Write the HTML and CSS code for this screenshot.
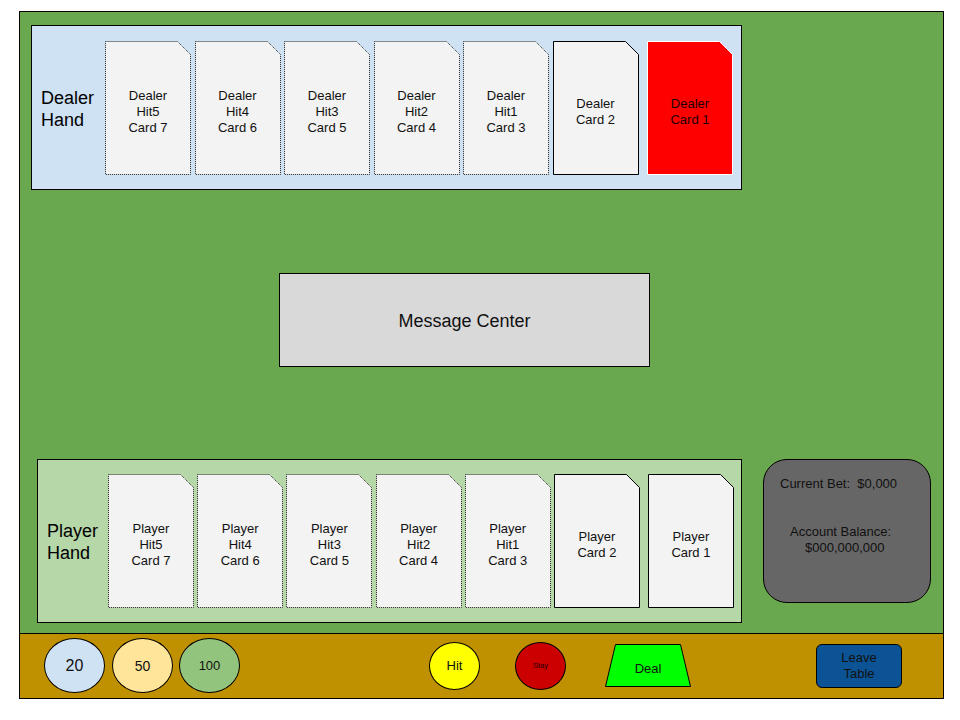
FILE: index.html
```html
<!DOCTYPE html>
<html>
<head>
<meta charset="utf-8">
<link rel="stylesheet" href="styles.css">
</head>
<body>
<div class="board">
  <div class="table">
    <div class="hand dealer">
      <div class="hand-label">Dealer<br>Hand</div>
      <div class="cards">
        <div class="card dotted"><svg class="shape" viewBox="0 0 86 134"><polygon points="0.5,0.5 72.5,0.5 85.5,13.5 85.5,133.5 0.5,133.5"/></svg><span class="txt">Dealer<br>Hit5<br>Card 7</span></div>
        <div class="card dotted"><svg class="shape" viewBox="0 0 86 134"><polygon points="0.5,0.5 72.5,0.5 85.5,13.5 85.5,133.5 0.5,133.5"/></svg><span class="txt">Dealer<br>Hit4<br>Card 6</span></div>
        <div class="card dotted"><svg class="shape" viewBox="0 0 86 134"><polygon points="0.5,0.5 72.5,0.5 85.5,13.5 85.5,133.5 0.5,133.5"/></svg><span class="txt">Dealer<br>Hit3<br>Card 5</span></div>
        <div class="card dotted"><svg class="shape" viewBox="0 0 86 134"><polygon points="0.5,0.5 72.5,0.5 85.5,13.5 85.5,133.5 0.5,133.5"/></svg><span class="txt">Dealer<br>Hit2<br>Card 4</span></div>
        <div class="card dotted"><svg class="shape" viewBox="0 0 86 134"><polygon points="0.5,0.5 72.5,0.5 85.5,13.5 85.5,133.5 0.5,133.5"/></svg><span class="txt">Dealer<br>Hit1<br>Card 3</span></div>
        <div class="card solid"><svg class="shape" viewBox="0 0 86 134"><polygon points="0.5,0.5 72.5,0.5 85.5,13.5 85.5,133.5 0.5,133.5"/></svg><span class="txt">Dealer<br>Card 2</span></div>
        <div class="card red last"><svg class="shape" viewBox="0 0 86 134"><polygon points="0.5,0.5 72.5,0.5 85.5,13.5 85.5,133.5 0.5,133.5"/></svg><span class="txt">Dealer<br>Card 1</span></div>
      </div>
    </div>

    <div class="message">Message Center</div>

    <div class="bottom-row">
      <div class="hand player">
        <div class="hand-label">Player<br>Hand</div>
        <div class="cards">
          <div class="card dotted"><svg class="shape" viewBox="0 0 86 134"><polygon points="0.5,0.5 72.5,0.5 85.5,13.5 85.5,133.5 0.5,133.5"/></svg><span class="txt">Player<br>Hit5<br>Card 7</span></div>
          <div class="card dotted"><svg class="shape" viewBox="0 0 86 134"><polygon points="0.5,0.5 72.5,0.5 85.5,13.5 85.5,133.5 0.5,133.5"/></svg><span class="txt">Player<br>Hit4<br>Card 6</span></div>
          <div class="card dotted"><svg class="shape" viewBox="0 0 86 134"><polygon points="0.5,0.5 72.5,0.5 85.5,13.5 85.5,133.5 0.5,133.5"/></svg><span class="txt">Player<br>Hit3<br>Card 5</span></div>
          <div class="card dotted"><svg class="shape" viewBox="0 0 86 134"><polygon points="0.5,0.5 72.5,0.5 85.5,13.5 85.5,133.5 0.5,133.5"/></svg><span class="txt">Player<br>Hit2<br>Card 4</span></div>
          <div class="card dotted"><svg class="shape" viewBox="0 0 86 134"><polygon points="0.5,0.5 72.5,0.5 85.5,13.5 85.5,133.5 0.5,133.5"/></svg><span class="txt">Player<br>Hit1<br>Card 3</span></div>
          <div class="card solid"><svg class="shape" viewBox="0 0 86 134"><polygon points="0.5,0.5 72.5,0.5 85.5,13.5 85.5,133.5 0.5,133.5"/></svg><span class="txt">Player<br>Card 2</span></div>
          <div class="card solid last"><svg class="shape" viewBox="0 0 86 134"><polygon points="0.5,0.5 72.5,0.5 85.5,13.5 85.5,133.5 0.5,133.5"/></svg><span class="txt">Player<br>Card 1</span></div>
        </div>
      </div>
      <div class="info">
        <div class="info-bet">Current Bet:&nbsp; $0,000</div>
        <div class="info-bal">Account Balance:</div>
        <div class="info-amt">$000,000,000</div>
      </div>
    </div>
  </div>

  <div class="controls">
    <div class="chip chip-20">20</div>
    <div class="chip chip-50">50</div>
    <div class="chip chip-100">100</div>
    <div class="btn-round btn-hit">Hit</div>
    <div class="btn-round btn-stay">Stay</div>
    <div class="btn-deal"><svg class="deal-shape" viewBox="0 0 86 43"><polygon points="10.5,0.5 75.5,0.5 85.5,42.5 0.5,42.5"/></svg><span class="deal-txt">Deal</span></div>
    <div class="btn-leave">Leave<br>Table</div>
  </div>
</div>
</body>
</html>
```

FILE: styles.css
```css
* { box-sizing: border-box; }

body {
  margin: 0;
  background: #ffffff;
  font-family: "Liberation Sans", Arial, sans-serif;
  color: #000;
}

.board {
  width: 925px;
  margin: 11px 0 0 19px;
}

.table {
  height: 623px;
  background: #6aa84f;
  border: 1px solid #000;
  display: flex;
  flex-direction: column;
  align-items: flex-start;
}

.hand {
  display: flex;
  align-items: center;
  border: 1px solid #000;
  padding-left: 9px;
}

.dealer {
  width: 711px;
  height: 165px;
  margin: 13px 0 0 11px;
  background: #cfe2f3;
}

.player {
  width: 705px;
  height: 164px;
  margin-left: 17px;
  background: #b6d7a8;
}

.hand-label {
  font-size: 18px;
  line-height: 22px;
  flex: none;
}

.dealer .hand-label { width: 64px; padding-top: 2px; }
.player .hand-label { width: 61px; padding-top: 2px; }

.cards {
  display: flex;
  align-items: center;
}

.card {
  position: relative;
  width: 86px;
  height: 134px;
  margin-right: 3.5px;
  display: flex;
  align-items: center;
  justify-content: center;
  text-align: center;
  font-size: 13px;
  line-height: 16px;
  padding-top: 8px;
  flex: none;
}

.card.last { margin-left: 5px; }

.player .card { margin-right: 3.2px; }
.player .card.last { margin-left: 4.8px; }

.shape {
  position: absolute;
  left: 0;
  top: 0;
  width: 86px;
  height: 134px;
}

.shape polygon {
  fill: #f3f3f3;
  stroke: #000;
  stroke-width: 1;
}

.dotted .shape polygon {
  stroke: #222;
  stroke-dasharray: 1 1;
}

.red .shape polygon {
  fill: #ff0000;
  stroke: #ffffff;
}

.red .txt { color: #1a0000; }

.txt {
  position: relative;
  color: #111;
}

.message {
  width: 371px;
  height: 94px;
  margin: 83px 0 0 259px;
  background: #d9d9d9;
  border: 1px solid #000;
  display: flex;
  align-items: center;
  justify-content: center;
  font-size: 18px;
  padding-top: 2px;
  color: #111;
}

.bottom-row {
  display: flex;
  align-items: flex-start;
  margin-top: 92px;
}

.info {
  width: 168px;
  height: 144px;
  margin-left: 21px;
  background: #666666;
  border: 1px solid #000;
  border-radius: 24px;
  font-size: 13px;
  line-height: 16px;
  padding-top: 16px;
  color: #111;
}

.info-bet { padding-left: 16px; }
.info-bal { padding-left: 26px; margin-top: 32px; }
.info-amt { padding-left: 41px; }

.controls {
  height: 65px;
  background: #bf9000;
  border: 1px solid #000;
  border-top: none;
  display: flex;
  align-items: center;
  padding-bottom: 1px;
}

.chip {
  width: 61px;
  height: 55px;
  border: 1px solid #000;
  border-radius: 50%;
  display: flex;
  align-items: center;
  justify-content: center;
  color: #111;
  flex: none;
}

.chip-20 { margin-left: 24px; background: #cfe2f3; font-size: 16px; }
.chip-50 { margin-left: 7px; background: #ffe599; font-size: 14px; }
.chip-100 { margin-left: 6px; background: #93c47d; font-size: 13px; }

.btn-round {
  width: 51px;
  height: 48px;
  border: 1px solid #000;
  border-radius: 50%;
  display: flex;
  align-items: center;
  justify-content: center;
  flex: none;
}

.btn-hit { margin-left: 189px; background: #ffff00; font-size: 13px; color: #111; }
.btn-stay { margin-left: 35px; background: #cc0000; font-size: 7.5px; color: #220000; }

.btn-deal {
  position: relative;
  width: 86px;
  height: 43px;
  margin-left: 39px;
  display: flex;
  align-items: center;
  justify-content: center;
  padding-top: 5px;
  font-size: 13px;
  flex: none;
}

.deal-shape {
  position: absolute;
  left: 0;
  top: 0;
  width: 86px;
  height: 43px;
}

.deal-shape polygon {
  fill: #00ff00;
  stroke: #000;
  stroke-width: 1;
}

.deal-txt { position: relative; color: #111; }

.btn-leave {
  width: 86px;
  height: 44px;
  margin-left: 125px;
  background: #0b5394;
  border: 1px solid #000;
  border-radius: 6px;
  display: flex;
  align-items: center;
  justify-content: center;
  text-align: center;
  font-size: 13px;
  line-height: 16px;
  color: #111;
  flex: none;
}
```
